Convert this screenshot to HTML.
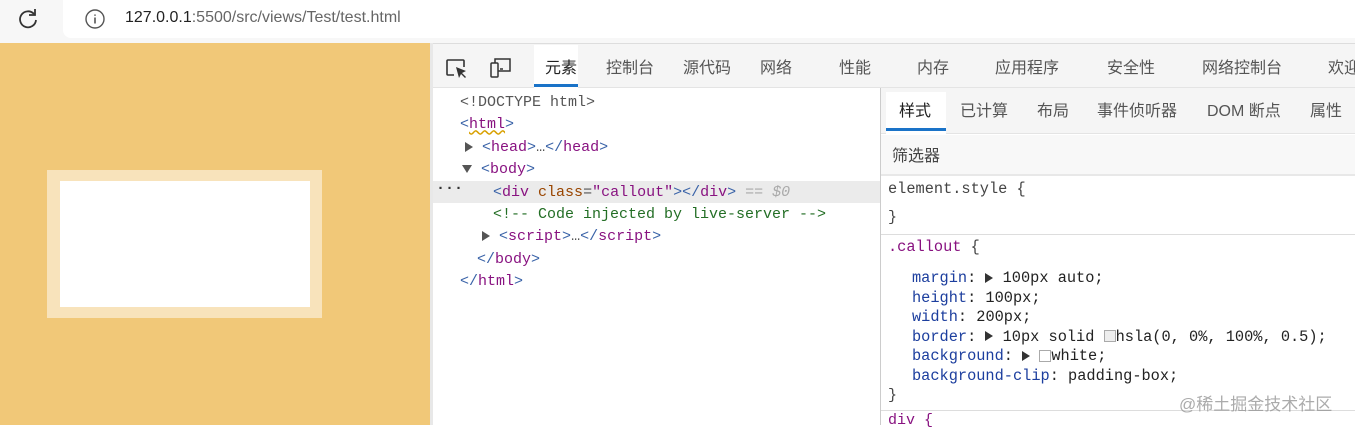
<!DOCTYPE html>
<html><head><meta charset="utf-8"><style>
*{margin:0;padding:0;box-sizing:border-box}
body{width:1355px;height:425px;overflow:hidden;background:#fff;position:relative;font-family:"Liberation Sans","Noto Sans CJK SC",sans-serif}
.a{position:absolute;white-space:nowrap}
.mono{font-family:"Liberation Mono","DejaVu Sans Mono",monospace;font-size:15px}
.tab{position:absolute;top:54px;font-size:16px;color:#555;white-space:nowrap}
.st{position:absolute;top:97px;font-size:16px;color:#555;white-space:nowrap}
.tg{color:#881280}.br{color:#3a63a8}.at{color:#994500}.pn{color:#1c3e9e}
.tri{display:inline-block;width:0;height:0;border-top:5px solid transparent;border-bottom:5px solid transparent;border-left:8px solid #333;vertical-align:middle}
.trd{display:inline-block;width:0;height:0;border-left:5px solid transparent;border-right:5px solid transparent;border-top:8px solid #555;vertical-align:middle}
</style></head><body>
<div class="a" style="left:0;top:0;width:1355px;height:43px;background:#f7f7f7"></div>
<div class="a" style="left:63px;top:0;width:1292px;height:38px;background:#fff;border-radius:0 0 0 8px"></div>
<svg class="a" style="left:16px;top:7px" width="24" height="24" viewBox="0 0 24 24"><path d="M18 7A8 8 0 1 0 20 13" fill="none" stroke="#333" stroke-width="1.8"/><path d="M19 2v6h-6" fill="none" stroke="#333" stroke-width="1.8"/></svg>
<svg class="a" style="left:84px;top:8px" width="22" height="22" viewBox="0 0 22 22"><circle cx="11" cy="11" r="9" fill="none" stroke="#555" stroke-width="1.4"/><path d="M11 9.5v6M11 6.5v1.3" stroke="#555" stroke-width="1.6"/></svg>
<div class="a" style="left:125px;top:9px;font-size:16px;color:#222">127.0.0.1<span style="color:#666">:5500/src/views/Test/test.html</span></div>
<div class="a" style="left:0;top:43px;width:430px;height:382px;background:#f1c878"></div>
<div class="a" style="left:47px;top:170px;width:275px;height:148px;background:#f8e3bb"></div>
<div class="a" style="left:60px;top:181px;width:250px;height:126px;background:#fff"></div>
<div class="a" style="left:430px;top:43px;width:925px;height:45px;background:#f5f5f5;border-top:1px solid #ddd;border-bottom:1px solid #e4e4e4"></div>
<div class="a" style="left:430px;top:43px;width:3px;height:382px;background:#e8e8e8"></div>
<svg class="a" style="left:444px;top:56px" width="26" height="26" viewBox="0 0 26 26"><path d="M10 19H4a1 1 0 0 1-1-1V5a1 1 0 0 1 1-1h15a1 1 0 0 1 1 1v6" fill="none" stroke="#333" stroke-width="1.6"/><path d="M12 11l3 11 2-4 4 4 1-1-4-4 4-2z" fill="#333"/></svg>
<svg class="a" style="left:488px;top:55px" width="26" height="26" viewBox="0 0 26 26"><rect x="3" y="8" width="7" height="14" rx="1" fill="none" stroke="#333" stroke-width="1.5"/><path d="M7 8V4h15v12H10" fill="none" stroke="#333" stroke-width="1.5"/><path d="M12 14h3" stroke="#333" stroke-width="1.5"/></svg>
<div class="a" style="left:534px;top:45px;width:44px;height:43px;background:#fff"></div>
<div class="a" style="left:534px;top:84px;width:44px;height:3px;background:#1a73c8"></div>
<div class="tab" style="left:545px;color:#222">元素</div>
<div class="tab" style="left:606px">控制台</div>
<div class="tab" style="left:683px">源代码</div>
<div class="tab" style="left:760px">网络</div>
<div class="tab" style="left:839px">性能</div>
<div class="tab" style="left:917px">内存</div>
<div class="tab" style="left:995px">应用程序</div>
<div class="tab" style="left:1107px">安全性</div>
<div class="tab" style="left:1202px">网络控制台</div>
<div class="tab" style="left:1328px">欢迎</div>
<div class="a" style="left:433px;top:181px;width:447px;height:22px;background:#ebebeb"></div>
<div class="mono a" style="left:460px;top:92px;line-height:22.4px;color:#555">
<div>&lt;!DOCTYPE html&gt;</div>
<div><span class="br">&lt;</span><span class="tg" style="text-decoration:underline wavy #d8a000">html</span><span class="br">&gt;</span></div>
<div style="margin-left:5px"><span class="tri" style="border-left-color:#555"></span> <span class="br">&lt;</span><span class="tg">head</span><span class="br">&gt;</span>…<span class="br">&lt;/</span><span class="tg">head</span><span class="br">&gt;</span></div>
<div style="margin-left:2px"><span class="trd"></span> <span class="br">&lt;</span><span class="tg">body</span><span class="br">&gt;</span></div>
<div style="margin-left:33px"><span class="br">&lt;</span><span class="tg">div</span> <span class="at">class</span>=<span class="tg">"callout"</span><span class="br">&gt;&lt;/</span><span class="tg">div</span><span class="br">&gt;</span> <span style="color:#aaa">== <i>$0</i></span></div>
<div style="margin-left:33px;color:#236e25">&lt;!-- Code injected by live-server --&gt;</div>
<div style="margin-left:22px"><span class="tri" style="border-left-color:#555"></span> <span class="br">&lt;</span><span class="tg">script</span><span class="br">&gt;</span>…<span class="br">&lt;/</span><span class="tg">script</span><span class="br">&gt;</span></div>
<div style="margin-left:17px"><span class="br">&lt;/</span><span class="tg">body</span><span class="br">&gt;</span></div>
<div><span class="br">&lt;/</span><span class="tg">html</span><span class="br">&gt;</span></div>
</div>
<div class="a mono" style="left:436px;top:180px;color:#333;font-weight:bold">···</div>
<div class="a" style="left:880px;top:88px;width:1px;height:337px;background:#ccc"></div>
<div class="a" style="left:881px;top:88px;width:474px;height:46px;background:#f5f5f5;border-bottom:1px solid #e4e4e4"></div>
<div class="a" style="left:886px;top:92px;width:60px;height:42px;background:#fff"></div>
<div class="a" style="left:886px;top:128px;width:60px;height:3px;background:#1a73c8"></div>
<div class="st" style="left:899px;color:#222">样式</div>
<div class="st" style="left:960px">已计算</div>
<div class="st" style="left:1037px">布局</div>
<div class="st" style="left:1097px">事件侦听器</div>
<div class="st" style="left:1207px">DOM 断点</div>
<div class="st" style="left:1310px">属性</div>
<div class="a" style="left:881px;top:135px;width:474px;height:41px;background:#f8f8f8;border-bottom:2px solid #e8e8e8"></div>
<div class="a" style="left:892px;top:142px;font-size:16px;color:#444">筛选器</div>
<div class="a" style="left:881px;top:234px;width:474px;height:1px;background:#ddd"></div>
<div class="a" style="left:881px;top:410px;width:474px;height:1px;background:#ddd"></div>
<div class="a mono" style="left:888px;top:180px;color:#444;font-size:15.3px">element.style {</div>
<div class="a mono" style="left:888px;top:209px;color:#444">}</div>
<div class="a mono" style="left:888px;top:238px;color:#444;font-size:15.3px"><span class="tg">.callout</span> {</div>
<div class="a mono" style="left:912px;top:269px;line-height:19.5px;color:#222;font-size:15.3px">
<div><span class="pn">margin</span>: <span class="tri"></span> 100px auto;</div>
<div><span class="pn">height</span>: 100px;</div>
<div><span class="pn">width</span>: 200px;</div>
<div><span class="pn">border</span>: <span class="tri"></span> 10px solid <span style="display:inline-block;width:12px;height:12px;border:1px solid #aaa;background:#eee;vertical-align:middle"></span>hsla(0, 0%, 100%, 0.5);</div>
<div><span class="pn">background</span>: <span class="tri"></span> <span style="display:inline-block;width:12px;height:12px;border:1px solid #aaa;background:#fff;vertical-align:middle"></span>white;</div>
<div><span class="pn">background-clip</span>: padding-box;</div>
</div>
<div class="a mono" style="left:888px;top:387px;color:#444">}</div>
<div class="a mono" style="left:888px;top:412px;color:#881280">div {</div>
<div class="a" style="left:1179px;top:390px;font-size:17px;color:rgba(150,150,150,0.8)">@稀土掘金技术社区</div>
</body></html>
